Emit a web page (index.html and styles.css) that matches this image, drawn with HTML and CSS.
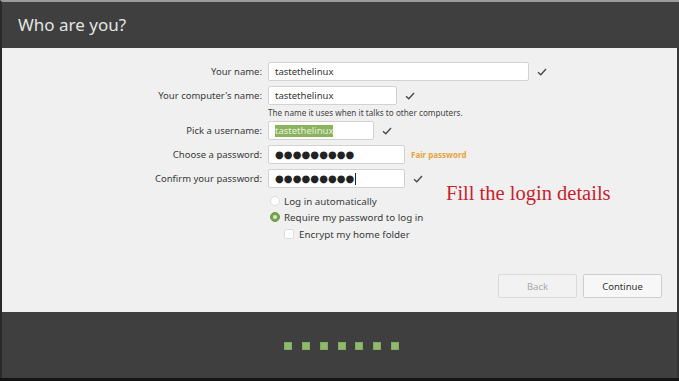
FILE: index.html
```html
<!DOCTYPE html>
<html>

<head>
    <meta charset="utf-8">
    <title>Who are you?</title>
    <meta name="viewport" content="width=device-width, initial-scale=1">
    <link rel="stylesheet" href="styles.css">
</head>

<body>
    <div class="window">
        <div class="header">
            <h1>Who are you?</h1>
        </div>

        <div class="content">
            <div class="form">
                <div class="row">
                    <label>Your name:</label>
                    <div class="field">
                        <span class="input w-name">tastethelinux</span>
                        <svg class="check" viewBox="0 0 10 8"><path d="M1 4.2 L3.8 6.8 L9 1"/></svg>
                    </div>
                </div>
                <div class="row">
                    <label>Your computer's name:</label>
                    <div class="field">
                        <span class="input w-host">tastethelinux</span>
                        <svg class="check" viewBox="0 0 10 8"><path d="M1 4.2 L3.8 6.8 L9 1"/></svg>
                    </div>
                </div>
                <div class="row hint-row">
                    <span></span>
                    <p class="hint">The name it uses when it talks to other computers.</p>
                </div>
                <div class="row">
                    <label>Pick a username:</label>
                    <div class="field">
                        <span class="input w-user"><span class="selected">tastethelinux</span></span>
                        <svg class="check" viewBox="0 0 10 8"><path d="M1 4.2 L3.8 6.8 L9 1"/></svg>
                    </div>
                </div>
                <div class="row">
                    <label>Choose a password:</label>
                    <div class="field">
                        <span class="input w-pass dots">●●●●●●●●●</span>
                        <span class="strength">Fair password</span>
                    </div>
                </div>
                <div class="row">
                    <label>Confirm your password:</label>
                    <div class="field">
                        <span class="input w-pass dots focus">●●●●●●●●●<i class="caret"></i></span>
                        <svg class="check" viewBox="0 0 10 8"><path d="M1 4.2 L3.8 6.8 L9 1"/></svg>
                    </div>
                </div>

                <div class="options">
                    <div class="option"><span class="radio"></span>Log in automatically</div>
                    <div class="option"><span class="radio on"></span>Require my password to log in</div>
                    <div class="option sub"><span class="box"></span>Encrypt my home folder</div>
                </div>
            </div>

            <p class="note">Fill the login details</p>

            <div class="buttons">
                <button class="btn" disabled>Back</button>
                <button class="btn">Continue</button>
            </div>
        </div>

        <div class="footer">
            <ul class="steps">
                <li></li>
                <li></li>
                <li></li>
                <li></li>
                <li></li>
                <li></li>
                <li></li>
            </ul>
        </div>
    </div>
</body>

</html>
```

FILE: styles.css
```css
* {
    margin: 0;
    padding: 0;
    list-style: none;
    box-sizing: border-box;
}

body,
html {
    width: 100%;
    height: 100%;
    background: #1c1c1c;
    font-family: "Noto Sans", "Open Sans", sans-serif;
}

.window {
    width: 679px;
    height: 381px;
    display: flex;
    flex-direction: column;
    border-bottom: 3px solid #141414;
}

.header {
    height: 48px;
    background: #3f3f3f;
    border-top: 2px solid #9a9a9a;
    border-left: 2px solid #2a2a2a;
    display: flex;
    align-items: center;
    padding-left: 16px;
}

.header h1 {
    font-weight: normal;
    font-size: 17px;
    color: #e4e4e4;
    margin-top: -2px;
}

.content {
    position: relative;
    height: 264px;
    background: #f0f0f0;
    border-left: 2px solid #2a2a2a;
    border-right: 2px solid #3a3a3a;
    display: flex;
    flex-direction: column;
}

.form {
    padding-top: 14px;
}

.row {
    display: grid;
    grid-template-columns: 260px 1fr;
    column-gap: 6px;
    align-items: center;
    margin-bottom: 5px;
}

.row label {
    text-align: right;
    font-size: 9.5px;
    color: #3a3a3a;
}

.field {
    display: flex;
    align-items: center;
}

.input {
    display: flex;
    align-items: center;
    height: 19px;
    background: #fff;
    border: 1px solid #d2d2d2;
    border-radius: 2px;
    padding-left: 6px;
    font-size: 9.5px;
    color: #333;
}

.w-name {
    width: 261px;
}

.w-host {
    width: 129px;
}

.w-user {
    width: 106px;
}

.w-pass {
    width: 137px;
}

.selected {
    background: #8ab35e;
    color: #e9f2de;
    line-height: 12px;
}

.dots {
    font-family: "DejaVu Sans", sans-serif;
    font-size: 10px;
    letter-spacing: 0.1px;
    color: #222;
}

.caret {
    display: inline-block;
    width: 1px;
    height: 12px;
    background: #222;
    margin-left: 1px;
}

.check {
    width: 10px;
    height: 8px;
    margin-left: 8px;
    fill: none;
    stroke: #4a4a4a;
    stroke-width: 1.4;
}

.strength {
    margin-left: 6px;
    font-size: 8px;
    font-weight: bold;
    color: #e8a23c;
}

.hint-row {
    margin-top: -3px;
    margin-bottom: 3px;
}

.hint {
    font-size: 8.2px;
    color: #444;
}

.options {
    padding-left: 268px;
    margin-top: 2px;
}

.option {
    display: flex;
    align-items: center;
    height: 16px;
    font-size: 9.8px;
    color: #3a3a3a;
    margin-bottom: 0;
}

.option.sub {
    padding-left: 14px;
    margin-top: 1px;
}

.radio {
    width: 10px;
    height: 10px;
    border-radius: 50%;
    background: #fff;
    border: 1px solid #ddd;
    margin-right: 4px;
    position: relative;
}

.radio.on {
    background: #74a64e;
    border-color: #6a9a46;
}

.radio.on:after {
    content: "";
    position: absolute;
    left: 2px;
    top: 2px;
    width: 4px;
    height: 4px;
    border-radius: 50%;
    background: #d7e8c6;
}

.box {
    width: 10px;
    height: 10px;
    background: #fff;
    border: 1px solid #ddd;
    border-radius: 2px;
    margin-right: 5px;
}

.note {
    position: absolute;
    left: 444px;
    top: 134px;
    font-family: "Liberation Serif", serif;
    font-size: 20.5px;
    color: #c9232b;
}

.buttons {
    margin-top: auto;
    margin-bottom: 14px;
    align-self: flex-end;
    margin-right: 15px;
    display: flex;
    gap: 6px;
}

.btn {
    width: 79px;
    height: 24px;
    background: #f7f7f7;
    border: 1px solid #cdcdcd;
    border-radius: 2px;
    font-family: "Noto Sans", sans-serif;
    font-size: 9.5px;
    color: #333;
}

.btn:disabled {
    background: #f2f2f2;
    border-color: #dadada;
    color: #a8a8a8;
}

.footer {
    flex: 1;
    background: #3f3f3f;
    border-left: 2px solid #2a2a2a;
    border-right: 2px solid #333;
    display: flex;
    align-items: center;
    justify-content: center;
}

.steps {
    display: flex;
    gap: 9.8px;
    margin-left: 4px;
    margin-top: 2px;
}

.steps li {
    width: 8px;
    height: 8px;
    background: #8fb96c;
    border: 1px solid #82ab60;
}
```
